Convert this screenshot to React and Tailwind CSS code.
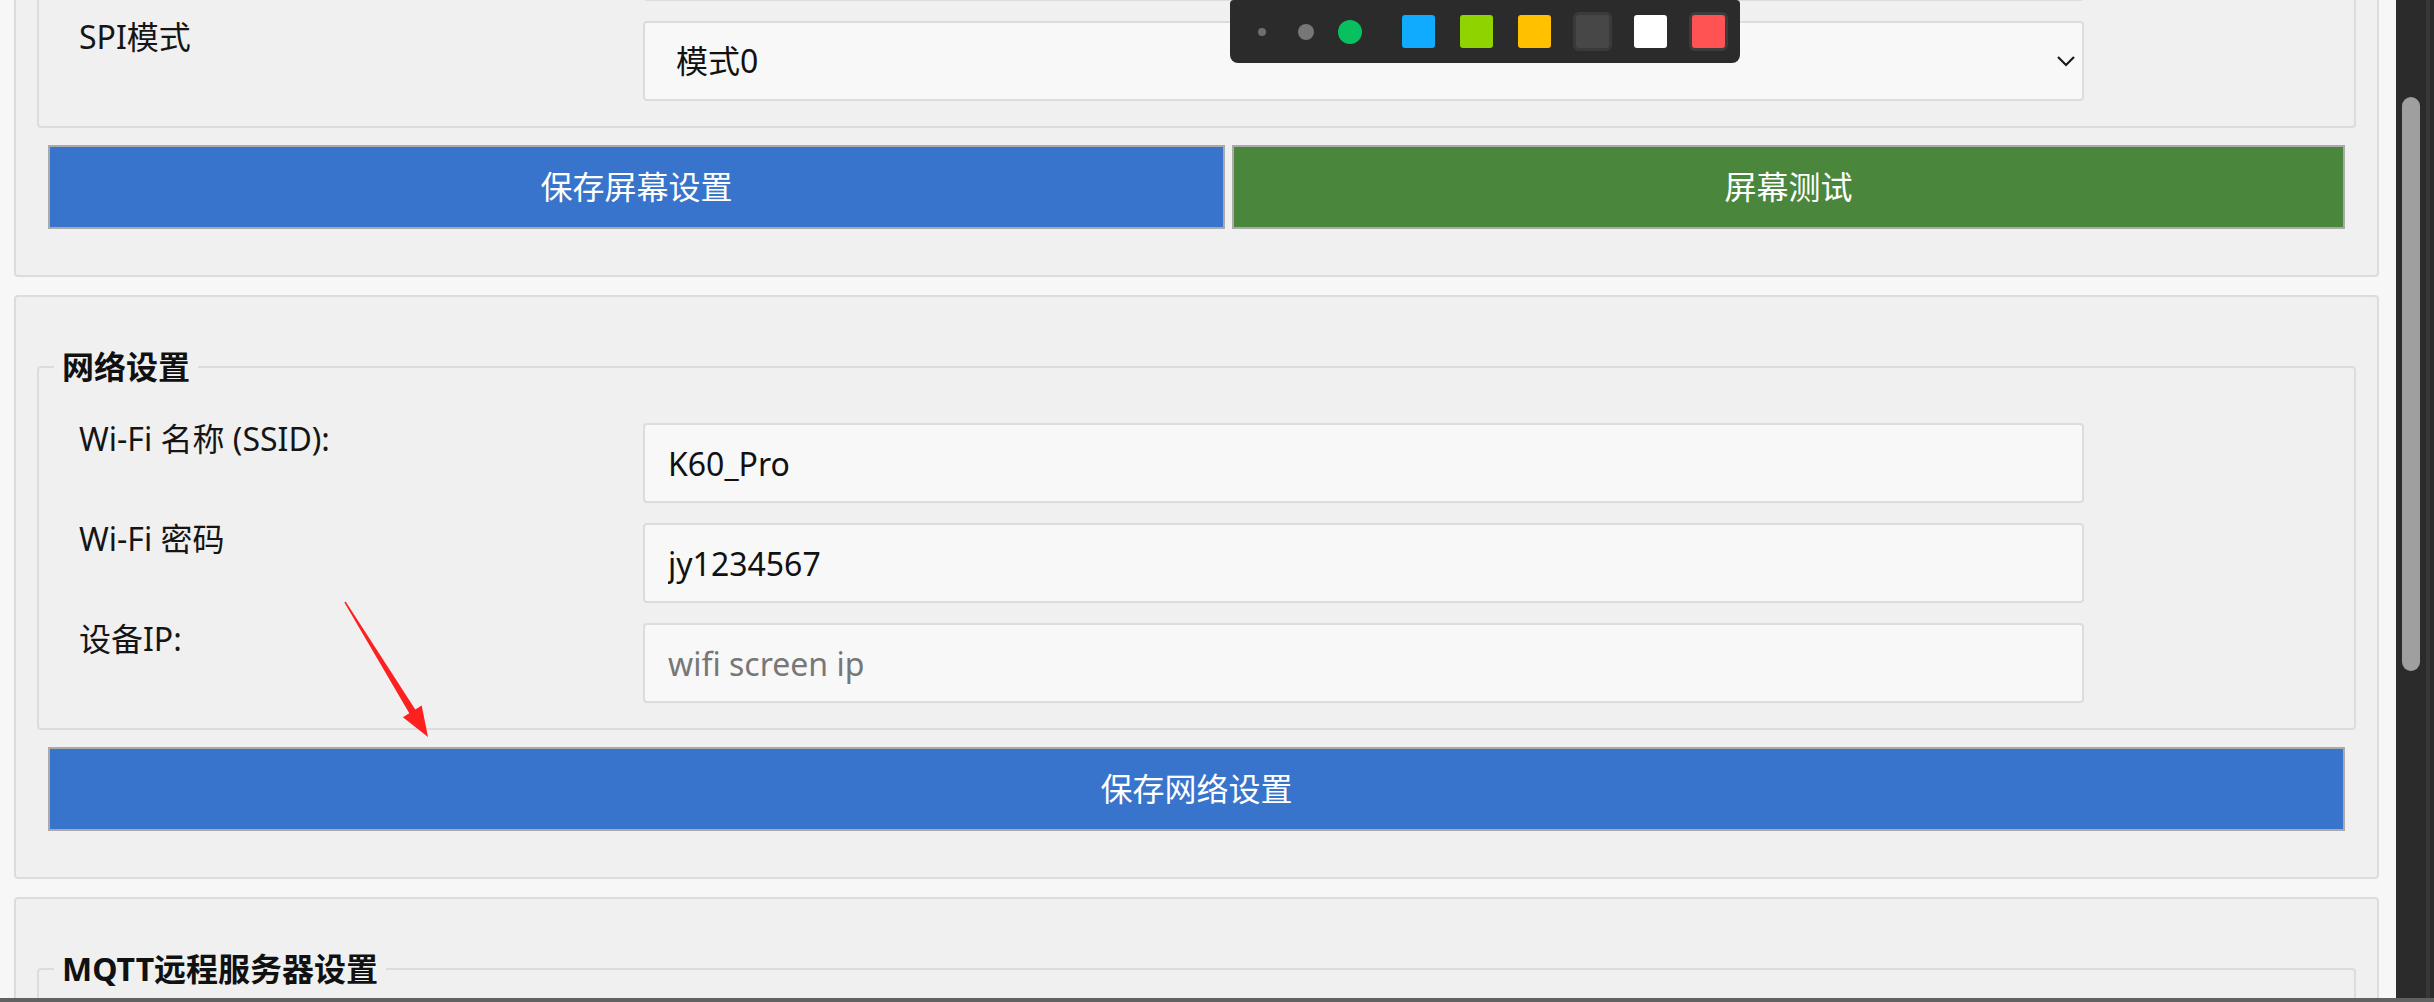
import React from "react";

const FONT = "font-['Noto_Sans','Noto_Sans_CJK_SC',sans-serif]";

function Row({ label, children }) {
	return (
		<div className="flex">
			<div className="w-[589px] pl-[25px] text-[32px] leading-[32px] text-[#151515]">
				{label}
			</div>
			{children}
		</div>
	);
}

function TextInput({ value, placeholder }) {
	return (
		<input
			readOnly
			defaultValue={value}
			placeholder={placeholder}
			className="h-[80px] w-[1441px] rounded-[4px] border-2 border-[#dcdcdc] bg-[#f8f8f8] pl-[23px] text-[32px] text-[#111] outline-none placeholder:text-[#777]"
		/>
	);
}

function FakeSelect({ value }) {
	return (
		<div className="flex h-[80px] w-[1441px] items-center justify-between rounded-[4px] border-2 border-[#dcdcdc] bg-[#f8f8f8] pl-[31px] pr-[5px] text-[32px] text-[#111]">
			<span>{value}</span>
			<svg width="20" height="12" viewBox="0 0 20 12" className="mr-[1px]">
				<path d="M2 2 L10 10 L18 2" fill="none" stroke="#1a1a1a" strokeWidth="2.2" />
			</svg>
		</div>
	);
}

function Section({ title, children, actions }) {
	return (
		<div className="rounded-[4px] border-2 border-[#dcdcdc] bg-[#f0f0f0] px-[21px] pb-[46px] pt-[46px]">
			<fieldset className="rounded-[4px] border-2 border-[#dcdcdc] px-[15px] pb-[25px]">
				<legend className="h-[48px] px-[8px] text-[32px] font-bold leading-[48px] text-[#111]">
					{title}
				</legend>
				<div className="flex flex-col gap-[20px] pt-[32px]">{children}</div>
			</fieldset>
			{actions && <div className="mx-[11px] mt-[17px] flex gap-[7px]">{actions}</div>}
		</div>
	);
}

function Btn({ children, className }) {
	return (
		<button
			className={
				"flex h-[84px] items-center justify-center border-2 border-[#aaaaaa] text-[32px] text-white " +
				className
			}
		>
			{children}
		</button>
	);
}

const swatches = [
	{ c: "bg-[#10aaff]", ring: "" },
	{ c: "bg-[#8fd400]", ring: "" },
	{ c: "bg-[#ffc000]", ring: "" },
	{ c: "bg-[#474747]", ring: "bg-[#3a3a3a]" },
	{ c: "bg-[#ffffff]", ring: "" },
	{ c: "bg-[#ff5252]", ring: "bg-[#3c3c3c]" },
];

function Toolbar() {
	return (
		<div className="absolute left-[1230px] top-0 flex h-[63px] w-[510px] items-center rounded-[8px] rounded-t-[4px] bg-[#2b2b2b] pl-[28px]">
			<div className="h-[8px] w-[8px] rounded-full bg-[#6e6e6e]" />
			<div className="ml-[32px] h-[16px] w-[16px] rounded-full bg-[#777777]" />
			<div className="ml-[24px] h-[24px] w-[24px] rounded-full bg-[#07c160]" />
			<div className="ml-[37px] flex gap-[19px]">
				{swatches.map((s, i) => (
					<div key={i} className={"rounded-[6px] p-[3px] " + s.ring}>
						<div className={"h-[33px] w-[33px] rounded-[3px] " + s.c} />
					</div>
				))}
			</div>
		</div>
	);
}

function Arrow() {
	return (
		<svg
			className="pointer-events-none absolute left-[340px] top-[596px]"
			width="95"
			height="146"
			viewBox="340 596 95 146"
		>
			<polygon
				points="344.4,602.4 409.3,713.2 402.9,717.2 428,737 421.7,705.6 415.3,709.6 345.6,601.6"
				fill="#fe1f1f"
			/>
		</svg>
	);
}

export default function App() {
	return (
		<div className={"relative flex h-[1002px] w-[2434px] flex-col overflow-hidden bg-[#f7f7f7] " + FONT}>
			<div className="flex min-h-0 flex-1">
				<div className="min-w-0 flex-1 overflow-hidden pl-[14px] pr-[17px]">
					<div className="-mt-[207px] flex flex-col gap-[18px]">
						<Section
							title={"\u00a0"}
							actions={
								<>
									<Btn className="w-[1177px] bg-[#3874cb]">保存屏幕设置</Btn>
									<Btn className="flex-1 bg-[#4a873c]">屏幕测试</Btn>
								</>
							}
						>
							<Row label="">
								<TextInput />
							</Row>
							<Row label="SPI模式">
								<FakeSelect value="模式0" />
							</Row>
						</Section>

						<Section
							title="网络设置"
							actions={<Btn className="flex-1 bg-[#3874cb]">保存网络设置</Btn>}
						>
							<Row label="Wi-Fi 名称 (SSID):">
								<TextInput value="K60_Pro" />
							</Row>
							<Row label="Wi-Fi 密码">
								<TextInput value="jy1234567" />
							</Row>
							<Row label="设备IP:">
								<TextInput placeholder="wifi screen ip" />
							</Row>
						</Section>

						<Section title="MQTT远程服务器设置">
							<div className="h-[80px]" />
						</Section>
					</div>
				</div>
				<div className="flex w-[38px] bg-[#2b2b2b]">
					<div className="w-[30px] pl-[6px] pt-[97px]">
						<div className="h-[574px] w-[18px] rounded-full bg-[#9f9f9f]" />
					</div>
					<div className="w-[4px] bg-[#383838]" />
				</div>
			</div>
			<div className="h-[4px] bg-[#616161]" />
			<Toolbar />
			<Arrow />
		</div>
	);
}
